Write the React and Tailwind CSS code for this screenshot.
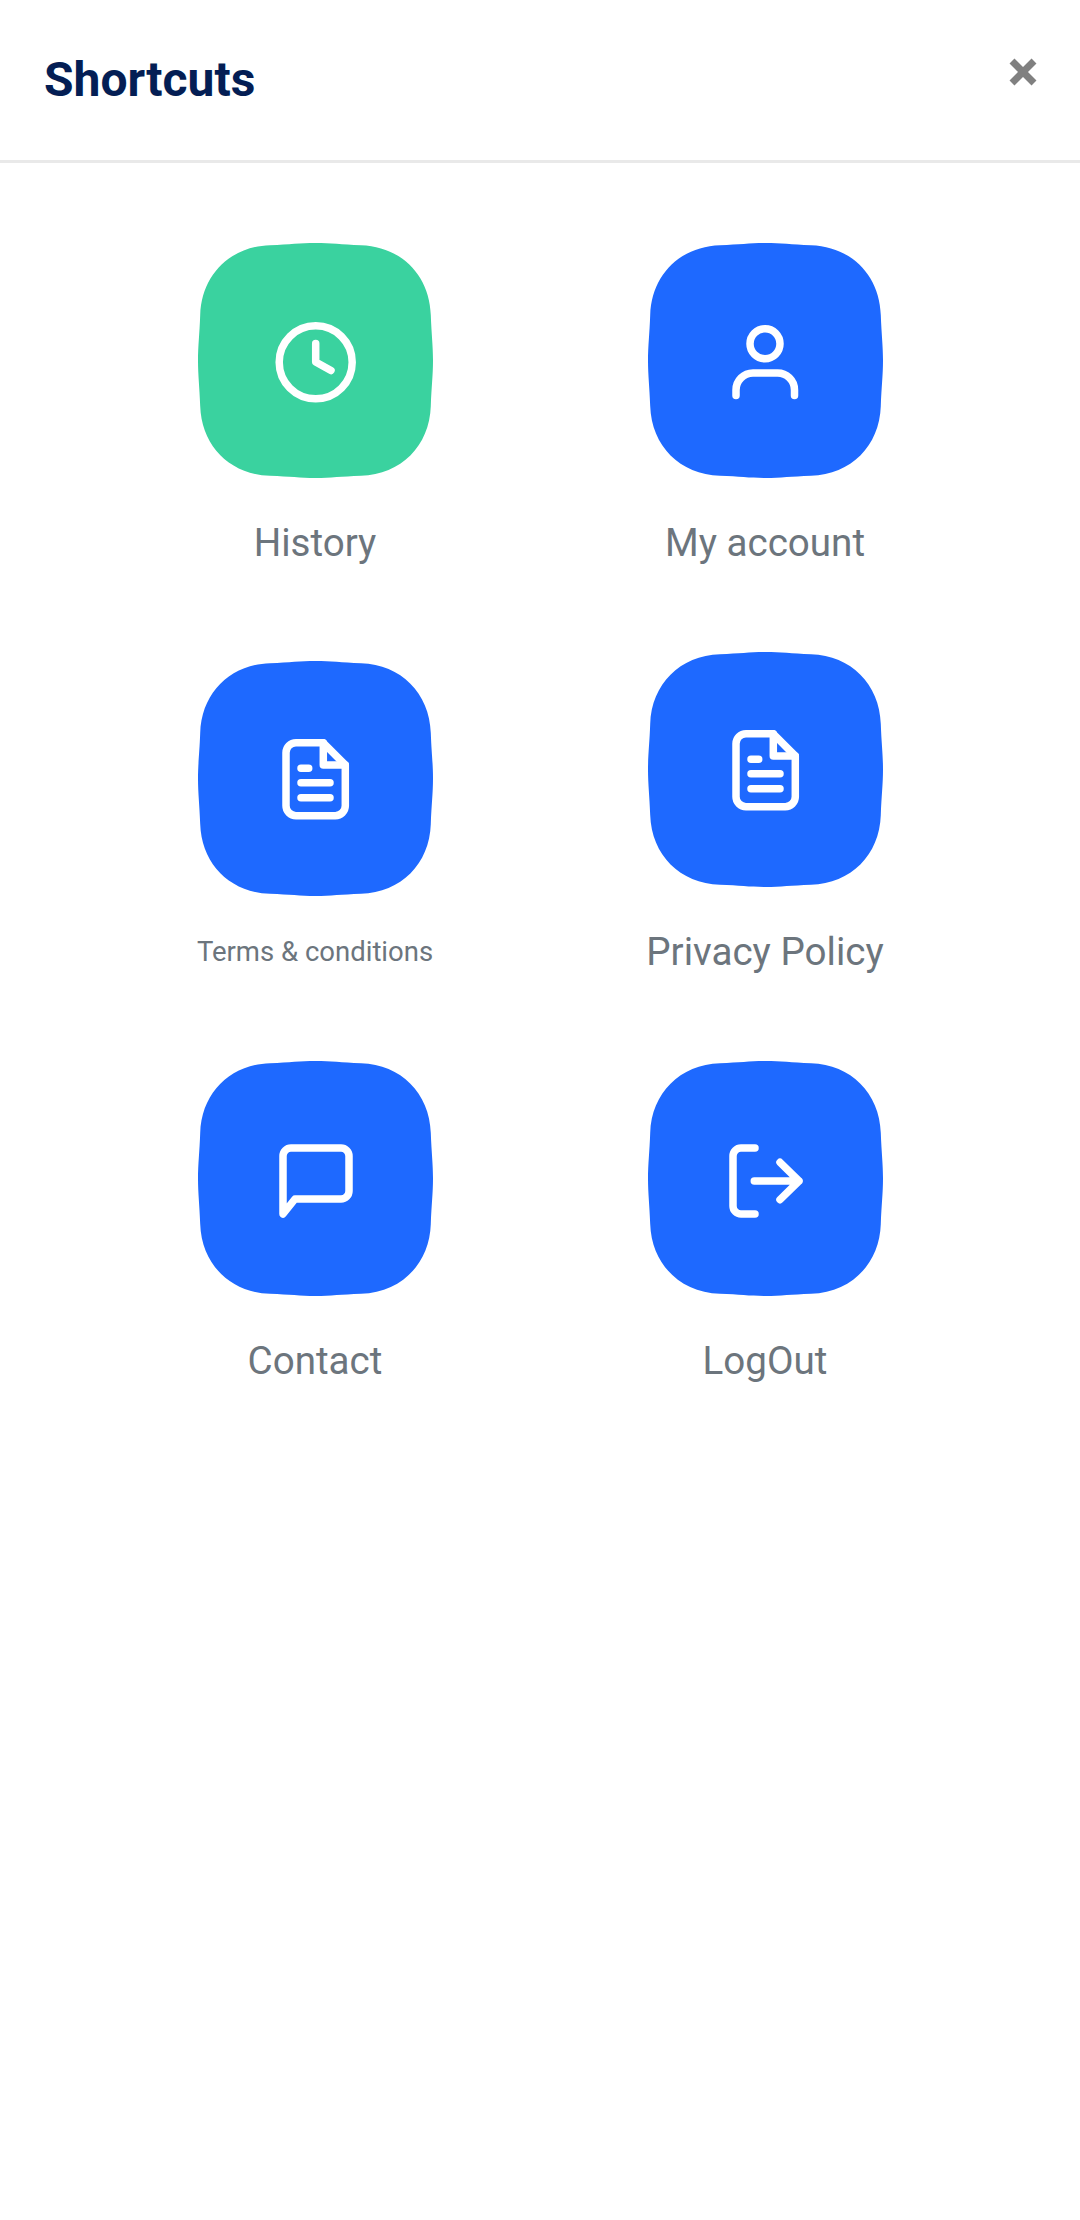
const FONT = "font-['Roboto','Liberation_Sans',sans-serif]";

const SQUIRCLE =
  "M117.5 0C102 0 92 1.5 72 2.2C32 3.5 3.5 32 2.2 72C1.5 92 0 102 0 117.5C0 133 1.5 143 2.2 163C3.5 203 32 231.5 72 232.8C92 233.5 102 235 117.5 235C133 235 143 233.5 163 232.8C203 231.5 231.5 203 232.8 163C233.5 143 235 133 235 117.5C235 102 233.5 92 232.8 72C231.5 32 203 3.5 163 2.2C143 1.5 133 0 117.5 0Z";

function ClockIcon() {
  return (
    <>
      <circle cx="117.7" cy="119.3" r="36.5" />
      <path d="M117.7 100.5V119L133 127.5" />
    </>
  );
}

function UserIcon() {
  return (
    <>
      <circle cx="117" cy="100.7" r="15" />
      <path d="M88 152.5V147A17 17 0 0 1 105 130H129A17 17 0 0 1 146.5 147V152.5" />
    </>
  );
}

function DocIcon() {
  return (
    <>
      <path d="M98 81.7H125L147.3 104V144.7A10 10 0 0 1 137.3 154.7H98A10 10 0 0 1 88 144.7V91.7A10 10 0 0 1 98 81.7Z" />
      <path d="M125.3 81.7V104H147.3" />
      <path d="M103 107.3H110.7M103 121.7H132M103 136.7H132" />
    </>
  );
}

function ChatIcon() {
  return <path d="M85 153V95A8 8 0 0 1 93 87H143A8 8 0 0 1 151 95V130A8 8 0 0 1 143 138H97Z" />;
}

function LogoutIcon() {
  return <path d="M107 87H93A8 8 0 0 0 85 95V145A8 8 0 0 0 93 153H107M106.3 120H151M132 101.3L151 120L132 138.7" />;
}

function Shortcut({ label, color, small, icon }) {
  return (
    <div className="flex h-[328px] flex-col items-center justify-center">
      <svg width="235" height="235" viewBox="0 0 235 235" fill="none">
        <path d={SQUIRCLE} fill={color} />
        <g stroke="#fff" strokeWidth="7.5" strokeLinecap="round" strokeLinejoin="round">
          {icon}
        </g>
      </svg>
      {small ? (
        <span className="mt-9 text-[27.5px] leading-[39px] text-[#6c757d]">{label}</span>
      ) : (
        <span className="mt-[37px] text-[38.6px] leading-[56px] text-[#6c757d]">{label}</span>
      )}
    </div>
  );
}

export default function App() {
  return (
    <div className={`${FONT} h-[2220px] w-[1080px] bg-white`}>
      <div className="flex h-[163px] items-start justify-between border-b-[3px] border-[#e9e9e9] pl-[44px] pr-[43px]">
        <h1 className="mt-[53px] text-[48px] font-bold leading-[54px] text-[#041e54]">Shortcuts</h1>
        <button type="button" className="mt-[58px]">
          <svg width="28" height="28" viewBox="0 0 28 28" fill="none" stroke="#808080" strokeWidth="7">
            <path d="M3 3L25 25M25 3L3 25" />
          </svg>
        </button>
      </div>
      <div className="grid grid-cols-[450px_450px] justify-center gap-y-[81px] pt-[80px]">
        <Shortcut label="History" color="#3ad29f" icon={<ClockIcon />} />
        <Shortcut label="My account" color="#1e69ff" icon={<UserIcon />} />
        <Shortcut label="Terms & conditions" color="#1e69ff" small icon={<DocIcon />} />
        <Shortcut label="Privacy Policy" color="#1e69ff" icon={<DocIcon />} />
        <Shortcut label="Contact" color="#1e69ff" icon={<ChatIcon />} />
        <Shortcut label="LogOut" color="#1e69ff" icon={<LogoutIcon />} />
      </div>
    </div>
  );
}
